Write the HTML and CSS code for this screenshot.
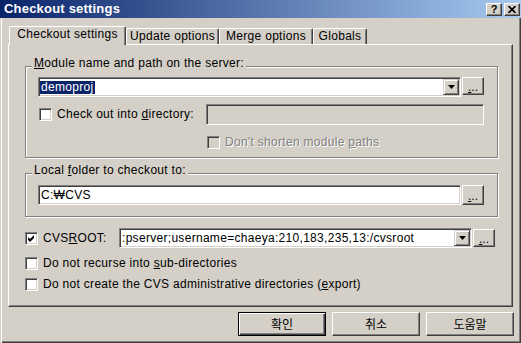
FILE: index.html
```html
<!DOCTYPE html>
<html lang="ko">
<head>
    <meta charset="UTF-8">
    <title>Checkout settings</title>
    <link rel="stylesheet" href="styles.css">
</head>
<body>
    <div class="window">
        <!-- Title bar -->
        <div class="titlebar">
            <span class="title">Checkout settings</span>
            <div class="caption-buttons">
                <span class="caption-btn">?</span>
                <span class="caption-btn">
                    <svg width="8" height="7" viewBox="0 0 8 7"><path d="M0.5 0 L7.5 7 M7.5 0 L0.5 7" stroke="#000" stroke-width="1.7"/></svg>
                </span>
            </div>
        </div>

        <div class="dialog">
            <!-- Tabs -->
            <div class="tabs">
                <div class="tab active">Checkout settings</div>
                <div class="tab tab-update">Update options</div>
                <div class="tab tab-merge">Merge options</div>
                <div class="tab tab-globals">Globals</div>
            </div>

            <div class="panel">
                <fieldset class="group group-module">
                    <legend><u>M</u>odule name and path on the server:</legend>
                    <div class="group-body">
                        <div class="field-row">
                            <div class="combo">
                                <span class="combo-value"><span class="selected">demoproj</span></span>
                                <span class="combo-arrow"><svg width="7" height="4" viewBox="0 0 7 4"><path d="M0 0 H7 L3.5 4 Z" fill="#000"/></svg></span>
                            </div>
                            <span class="btn browse"><u>.</u>..</span>
                        </div>
                        <div class="check-row dir-row">
                            <span class="check"></span>
                            <span class="label">Check out into <u>d</u>irectory:</span>
                            <div class="textbox disabled dir-input"></div>
                        </div>
                        <div class="check-row shorten-row">
                            <span class="check disabled"></span>
                            <span class="label muted">Don't shorten module <u>p</u>aths</span>
                        </div>
                    </div>
                </fieldset>

                <fieldset class="group group-local">
                    <legend>Local <u>f</u>older to checkout to:</legend>
                    <div class="group-body">
                        <div class="field-row">
                            <div class="textbox local-input">C:₩CVS</div>
                            <span class="btn browse tall"><u>.</u>..</span>
                        </div>
                    </div>
                </fieldset>

                <div class="check-row root-row">
                    <span class="check">
                        <svg width="11" height="11" viewBox="1 1 11 11"><path d="M3 5 L5 7 L9 3 L9 6 L5 10 L3 8 Z" fill="#000"/></svg>
                    </span>
                    <span class="label root-label">CVS<u>R</u>OOT:</span>
                    <div class="combo">
                        <span class="combo-value root-value">:pserver;username=chaeya:210,183,235,13:/cvsroot</span>
                        <span class="combo-arrow"><svg width="7" height="4" viewBox="0 0 7 4"><path d="M0 0 H7 L3.5 4 Z" fill="#000"/></svg></span>
                    </div>
                    <span class="btn browse"><u>.</u>..</span>
                </div>

                <div class="check-row opt-row">
                    <span class="check"></span>
                    <span class="label">Do not recurse into <u>s</u>ub-directories</span>
                </div>
                <div class="check-row opt-row second">
                    <span class="check"></span>
                    <span class="label">Do not create the CVS administrative directories (<u>e</u>xport)</span>
                </div>
            </div>

            <!-- Dialog buttons -->
            <div class="actions">
                <span class="btn action default">확인</span>
                <span class="btn action">취소</span>
                <span class="btn action">도움말</span>
            </div>
        </div>
    </div>
</body>
</html>
```

FILE: styles.css
```css
* {
    box-sizing: border-box;
}
body {
    margin: 0;
    background: #d4d0c8;
    font-family: "Liberation Sans", Arial, sans-serif;
    font-size: 12px;
    letter-spacing: 0.3px;
    color: #000;
}
.window {
    width: 521px;
    height: 343px;
    background: #d4d0c8;
    box-shadow: inset 1px 0 #d4d0c8, inset 2px 0 #fff, inset -1px -1px #404040, inset -2px -2px #808080;
    overflow: hidden;
}
/* Title bar */
.titlebar {
    height: 18px;
    display: flex;
    justify-content: space-between;
    align-items: flex-start;
    padding-left: 4px;
    background: linear-gradient(to right, #0a246a, #a6caf0);
}
.title {
    color: #fff;
    font-weight: bold;
    font-size: 13px;
    letter-spacing: 0.2px;
    line-height: 18px;
}
.caption-buttons {
    display: flex;
    gap: 2px;
    margin: 3px 1px 0 0;
}
.caption-btn {
    width: 16px;
    height: 13px;
    display: flex;
    align-items: center;
    justify-content: center;
    background: #d4d0c8;
    border: 1px solid;
    border-color: #fff #404040 #404040 #fff;
    box-shadow: inset -1px -1px #808080;
    font-weight: bold;
    font-size: 11px;
    line-height: 11px;
    letter-spacing: 0;
}
/* Body of the dialog */
.dialog {
    padding: 8px 8px 0;
}
.tabs {
    display: flex;
    align-items: flex-end;
    height: 18px;
    padding-left: 3px;
}
.tab {
    height: 16px;
    padding-top: 1px;
    border: 1px solid;
    border-color: #fff #404040 transparent #fff;
    border-bottom: 0;
    border-radius: 2px 2px 0 0;
    box-shadow: inset -1px 0 #808080;
    line-height: 13px;
    text-align: center;
    white-space: nowrap;
}
.tab.active {
    width: 117px;
    height: 19px;
    margin: 0 0 -1px -2px;
    position: relative;
    z-index: 1;
    background: #d4d0c8;
}
.tab-update {
    width: 93px;
}
.tab-merge {
    width: 94px;
}
.tab-globals {
    width: 54px;
}
.panel {
    height: 263px;
    padding: 12px 14px 0 16px;
    border: 1px solid;
    border-color: #fff #404040 #404040 #fff;
    box-shadow: inset -1px -1px #808080;
}
/* Group boxes */
.group {
    margin: 0;
    padding: 0;
    min-width: 0;
    border: 1px solid #808080;
    box-shadow: inset 1px 1px #fff, 1px 1px #fff;
}
.group legend {
    margin-left: 6px;
    padding: 0 2px 6px;
    line-height: 13px;
    background: #d4d0c8;
}
.group-module .group-body {
    padding: 1px 13px 8px 12px;
}
.group-local {
    margin-top: 6px;
}
.group-local .group-body {
    padding: 2px 13px 11px 12px;
}
.field-row {
    display: flex;
    align-items: flex-start;
    gap: 1px;
}
/* Sunken controls */
.combo,
.textbox,
.check {
    border: 1px solid;
    border-color: #808080 #fff #fff #808080;
    box-shadow: inset 1px 1px #404040, inset -1px -1px #d4d0c8;
    background: #fff;
}
.combo {
    flex: 1;
    height: 20px;
    display: flex;
    padding: 1px;
}
.combo-value {
    flex: 1;
    display: flex;
    align-items: center;
    overflow: hidden;
    white-space: nowrap;
    line-height: 13px;
}
.selected {
    background: #0a246a;
    color: #fff;
    padding: 0 2px 0 1px;
}
.root-value {
    padding-left: 1px;
}
.combo-arrow {
    width: 16px;
    height: 16px;
    display: flex;
    align-items: center;
    justify-content: center;
    border: 1px solid;
    border-color: #d4d0c8 #404040 #404040 #d4d0c8;
    box-shadow: inset 1px 1px #fff, inset -1px -1px #808080;
    background: #d4d0c8;
}
.textbox {
    height: 21px;
    padding: 2px 2px 0;
    line-height: 15px;
}
.textbox.disabled {
    background: #d4d0c8;
}
.local-input {
    flex: 1;
    height: 20px;
}
/* Raised buttons */
.btn {
    display: flex;
    align-items: center;
    justify-content: center;
    background: #d4d0c8;
    border: 1px solid;
    border-color: #fff #404040 #404040 #fff;
    box-shadow: inset -1px -1px #808080;
}
.browse {
    width: 22px;
    height: 18px;
    flex: none;
    padding-top: 2px;
    line-height: 12px;
    letter-spacing: 0;
}
.browse.tall {
    height: 20px;
}
/* Check boxes */
.check-row {
    display: flex;
    align-items: center;
}
.check {
    width: 13px;
    height: 13px;
    flex: none;
}
.check svg {
    display: block;
}
.check.disabled {
    background: #d4d0c8;
}
.check-row .label {
    margin-left: 5px;
    line-height: 13px;
    white-space: nowrap;
}
.muted {
    color: #808080;
    text-shadow: 1px 1px #fff;
}
.dir-row {
    height: 21px;
    margin-top: 7px;
    padding-left: 1px;
}
.dir-input {
    width: 278px;
    margin-left: auto;
}
.shorten-row {
    margin-top: 11px;
    padding-left: 169px;
}
.root-row {
    height: 20px;
    margin: 11px 3px 0 0;
}
.check-row .root-label {
    width: 76px;
}
.root-row .combo {
    margin-right: 1px;
}
.opt-row {
    margin-top: 9px;
}
.opt-row.second {
    margin-top: 8px;
}
/* OK / Cancel / Help */
.actions {
    display: flex;
    justify-content: flex-end;
    gap: 6px;
    margin: 5px -1px 0 0;
}
.action {
    width: 88px;
    height: 24px;
    padding-bottom: 2px;
    font-family: "Noto Sans CJK KR", sans-serif;
    font-size: 12px;
    letter-spacing: 0;
}
.action.default {
    border-color: #000;
    box-shadow: inset 1px 1px #fff, inset -1px -1px #404040, inset -2px -2px #808080;
}
```
